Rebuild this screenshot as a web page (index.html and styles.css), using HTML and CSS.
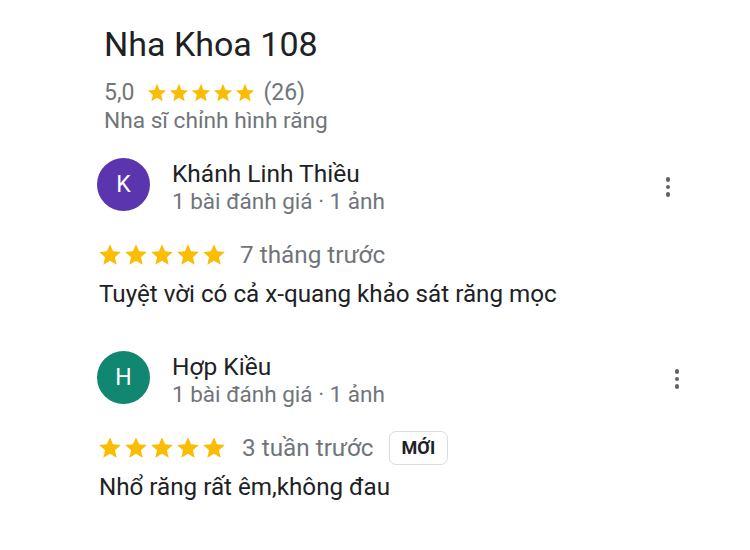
FILE: index.html
```html
<!DOCTYPE html>
<html lang="vi">
<head>
<meta charset="utf-8">
<title>Nha Khoa 108</title>
<link rel="stylesheet" href="styles.css">
</head>
<body>
<div class="page">
  <header class="place">
    <h1 class="place-title">Nha Khoa 108</h1>
    <div class="place-rating">
      <span class="rating-value">5,0</span>
      <span class="stars stars-small">
        <svg viewBox="0 0 24 24"><path d="M12 17.27L18.18 21l-1.64-7.03L22 9.24l-7.19-.61L12 2 9.19 8.63 2 9.24l5.46 4.73L5.82 21z"/></svg>
        <svg viewBox="0 0 24 24"><path d="M12 17.27L18.18 21l-1.64-7.03L22 9.24l-7.19-.61L12 2 9.19 8.63 2 9.24l5.46 4.73L5.82 21z"/></svg>
        <svg viewBox="0 0 24 24"><path d="M12 17.27L18.18 21l-1.64-7.03L22 9.24l-7.19-.61L12 2 9.19 8.63 2 9.24l5.46 4.73L5.82 21z"/></svg>
        <svg viewBox="0 0 24 24"><path d="M12 17.27L18.18 21l-1.64-7.03L22 9.24l-7.19-.61L12 2 9.19 8.63 2 9.24l5.46 4.73L5.82 21z"/></svg>
        <svg viewBox="0 0 24 24"><path d="M12 17.27L18.18 21l-1.64-7.03L22 9.24l-7.19-.61L12 2 9.19 8.63 2 9.24l5.46 4.73L5.82 21z"/></svg>
      </span>
      <span class="rating-count">(26)</span>
    </div>
    <div class="place-category">Nha sĩ chỉnh hình răng</div>
  </header>

  <section class="reviews">
    <article class="review review-first">
      <div class="review-head">
        <div class="avatar avatar-purple">K</div>
        <div class="reviewer">
          <div class="reviewer-name">Khánh Linh Thiều</div>
          <div class="reviewer-meta">1 bài đánh giá · 1 ảnh</div>
        </div>
        <div class="menu" aria-label="Thêm"><span></span><span></span><span></span></div>
      </div>
      <div class="review-rating">
        <span class="stars stars-large">
          <svg viewBox="0 0 24 24"><path d="M12 17.27L18.18 21l-1.64-7.03L22 9.24l-7.19-.61L12 2 9.19 8.63 2 9.24l5.46 4.73L5.82 21z"/></svg>
          <svg viewBox="0 0 24 24"><path d="M12 17.27L18.18 21l-1.64-7.03L22 9.24l-7.19-.61L12 2 9.19 8.63 2 9.24l5.46 4.73L5.82 21z"/></svg>
          <svg viewBox="0 0 24 24"><path d="M12 17.27L18.18 21l-1.64-7.03L22 9.24l-7.19-.61L12 2 9.19 8.63 2 9.24l5.46 4.73L5.82 21z"/></svg>
          <svg viewBox="0 0 24 24"><path d="M12 17.27L18.18 21l-1.64-7.03L22 9.24l-7.19-.61L12 2 9.19 8.63 2 9.24l5.46 4.73L5.82 21z"/></svg>
          <svg viewBox="0 0 24 24"><path d="M12 17.27L18.18 21l-1.64-7.03L22 9.24l-7.19-.61L12 2 9.19 8.63 2 9.24l5.46 4.73L5.82 21z"/></svg>
        </span>
        <span class="review-date">7 tháng trước</span>
      </div>
      <p class="review-text">Tuyệt vời có cả x-quang khảo sát răng mọc</p>
    </article>

    <article class="review review-second">
      <div class="review-head">
        <div class="avatar avatar-green">H</div>
        <div class="reviewer">
          <div class="reviewer-name">Hợp Kiều</div>
          <div class="reviewer-meta">1 bài đánh giá · 1 ảnh</div>
        </div>
        <div class="menu" aria-label="Thêm"><span></span><span></span><span></span></div>
      </div>
      <div class="review-rating">
        <span class="stars stars-large">
          <svg viewBox="0 0 24 24"><path d="M12 17.27L18.18 21l-1.64-7.03L22 9.24l-7.19-.61L12 2 9.19 8.63 2 9.24l5.46 4.73L5.82 21z"/></svg>
          <svg viewBox="0 0 24 24"><path d="M12 17.27L18.18 21l-1.64-7.03L22 9.24l-7.19-.61L12 2 9.19 8.63 2 9.24l5.46 4.73L5.82 21z"/></svg>
          <svg viewBox="0 0 24 24"><path d="M12 17.27L18.18 21l-1.64-7.03L22 9.24l-7.19-.61L12 2 9.19 8.63 2 9.24l5.46 4.73L5.82 21z"/></svg>
          <svg viewBox="0 0 24 24"><path d="M12 17.27L18.18 21l-1.64-7.03L22 9.24l-7.19-.61L12 2 9.19 8.63 2 9.24l5.46 4.73L5.82 21z"/></svg>
          <svg viewBox="0 0 24 24"><path d="M12 17.27L18.18 21l-1.64-7.03L22 9.24l-7.19-.61L12 2 9.19 8.63 2 9.24l5.46 4.73L5.82 21z"/></svg>
        </span>
        <span class="review-date">3 tuần trước</span>
        <span class="badge">MỚI</span>
      </div>
      <p class="review-text">Nhổ răng rất êm,không đau</p>
    </article>
  </section>
</div>
</body>
</html>
```

FILE: styles.css
```css
* { box-sizing: border-box; }

html, body {
  margin: 0;
  padding: 0;
  background: #ffffff;
}

body {
  font-family: Roboto, "Noto Sans", "Liberation Sans", sans-serif;
  color: #202124;
  width: 750px;
  height: 550px;
  overflow: hidden;
}

.page {
  padding: 24px 0 0 97px;
}

.place {
  padding-left: 7px;
}

.place-title {
  margin: 0;
  font-size: 34px;
  line-height: 40px;
  font-weight: 400;
  color: #202124;
}

.place-rating {
  margin-top: 16px;
  display: flex;
  align-items: center;
  height: 26px;
  line-height: 26px;
  font-size: 23px;
  color: #70757a;
}

.rating-value { margin-right: 12px; }

.rating-count { margin-left: 7px; }

.stars {
  display: inline-flex;
  align-items: center;
}

.stars svg { fill: #fbbc04; display: block; }

.stars-small svg { width: 22px; height: 22px; }

.stars-large svg { width: 26px; height: 26px; }

.place-category {
  margin-top: 2px;
  font-size: 22.7px;
  line-height: 26px;
  color: #70757a;
}

.reviews {
  margin-top: 24px;
}

.review {
  width: 583px;
}

.review-second {
  margin-top: 43px;
  width: 592px;
}

.review-head {
  display: flex;
  align-items: flex-start;
}

.avatar {
  flex: none;
  width: 53px;
  height: 53px;
  border-radius: 50%;
  color: #ffffff;
  font-size: 23px;
  display: flex;
  align-items: center;
  justify-content: center;
}

.avatar-purple { background: #5b35ae; }

.avatar-green { background: #118670; }

.reviewer {
  flex: 1;
  margin-left: 22px;
  padding-top: 2px;
}

.reviewer-name {
  font-size: 24.5px;
  line-height: 28px;
  color: #202124;
}

.reviewer-meta {
  font-size: 22.5px;
  line-height: 26px;
  color: #70757a;
}

.menu {
  flex: none;
  width: 24px;
  height: 24px;
  margin-top: 17px;
  display: flex;
  flex-direction: column;
  align-items: center;
  justify-content: center;
  gap: 3px;
}

.menu span {
  width: 4.5px;
  height: 4.5px;
  border-radius: 50%;
  background: #5f6368;
}

.review-second .menu { margin-top: 16px; }

.review-rating {
  margin-top: 28px;
  height: 26px;
  line-height: 26px;
  display: flex;
  align-items: center;
}

.review-date {
  margin-left: 13px;
  font-size: 24.3px;
  color: #70757a;
}

.review-second .review-date { margin-left: 15px; }

.badge {
  margin-left: 15px;
  height: 34px;
  padding: 0 12px;
  display: inline-flex;
  align-items: center;
  border: 1px solid #dadce0;
  border-radius: 7px;
  font-size: 18px;
  font-weight: 700;
  color: #202124;
}

.review-text {
  margin: 12px 0 0 2px;
  font-size: 24.2px;
  line-height: 28px;
  color: #202124;
}
```
